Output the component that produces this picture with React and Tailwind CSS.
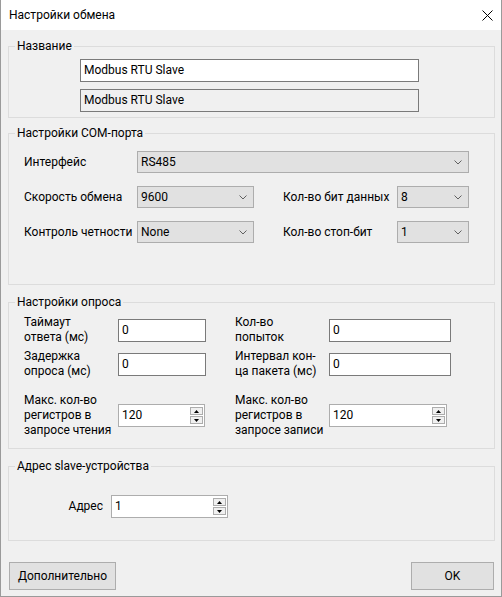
import React from 'react';

const Chevron = () => (
    <svg width="8" height="5" viewBox="0 0 8 5" className="shrink-0">
        <polyline points="0.5,0.5 4,4 7.5,0.5" fill="none" stroke="#606060" strokeWidth="1" />
    </svg>
);

const Combo = ({ value, className = '' }) => (
    <div className={`h-[22px] flex items-center justify-between pl-[3px] pr-[6px] bg-[#e1e1e1] border border-[#adadad] ${className}`}>
        <span>{value}</span>
        <Chevron />
    </div>
);

const TextBox = ({ value, className = '', disabled = false }) => (
    <div
        className={`h-[23px] flex items-center pl-[3px] border ${
            disabled ? 'bg-[#f0f0f0] border-[#7a7a7a]' : 'bg-white border-[#7a7a7a]'
        } ${className}`}
    >
        {value}
    </div>
);

const SpinArrow = ({ up }) => (
    <div className="w-[13px] h-[8px] border border-[#adadad] bg-[#f0f0f0] flex items-center justify-center">
        <svg width="5" height="3" viewBox="0 0 5 3">
            {up ? <polygon points="2.5,0 5,3 0,3" fill="#000" /> : <polygon points="0,0 5,0 2.5,3" fill="#000" />}
        </svg>
    </div>
);

const SpinBox = ({ value, className = '' }) => (
    <div className={`h-[23px] flex items-center justify-between pl-[3px] pr-[1px] bg-white border border-[#adadad] ${className}`}>
        <span>{value}</span>
        <div className="flex flex-col gap-[1px]">
            <SpinArrow up />
            <SpinArrow />
        </div>
    </div>
);

const Group = ({ title, className = '', children }) => (
    <fieldset className={`border border-[#dcdcdc] ${className}`}>
        <legend className="ml-[6px] px-[2px] leading-[14px]">{title}</legend>
        {children}
    </fieldset>
);

export default function App() {
    return (
        <div className="w-[502px] h-[597px] flex flex-col bg-[#f0f0f0] border-x border-b border-[#9a9a9a] text-[12px] text-black font-['Roboto',sans-serif] leading-[15px]">
            {/* title bar */}
            <div className="h-[30px] shrink-0 bg-white flex items-center justify-between pl-[8px] pr-[8px]">
                <span>Настройки обмена</span>
                <svg width="11" height="11" viewBox="0 0 11 11">
                    <path d="M0.5 0.5 L10.5 10.5 M10.5 0.5 L0.5 10.5" stroke="#000" strokeWidth="1" />
                </svg>
            </div>

            <div className="flex flex-col pl-[7px] pr-[6px]">
                <Group title="Название" className="mt-[9px]">
                    <div className="flex flex-col gap-[7px] pl-[71px] pt-[6px] pb-[5px]">
                        <TextBox value="Modbus RTU Slave" className="w-[339px]" />
                        <TextBox value="Modbus RTU Slave" className="w-[339px]" disabled />
                    </div>
                </Group>

                <Group title="Настройки COM-порта" className="mt-[8px]">
                    <div className="grid grid-cols-[113px_117px_29px_114px_72px] items-center gap-y-[13px] pl-[15px] pt-[11px] pb-[41px]">
                        <span>Интерфейс</span>
                        <Combo value="RS485" className="col-span-4" />

                        <span>Скорость обмена</span>
                        <Combo value="9600" />
                        <span />
                        <span>Кол-во бит данных</span>
                        <Combo value="8" />

                        <span>Контроль четности</span>
                        <Combo value="None" />
                        <span />
                        <span>Кол-во стоп-бит</span>
                        <Combo value="1" />
                    </div>
                </Group>

                <Group title="Настройки опроса" className="mt-[10px]">
                    <div className="grid grid-cols-[94px_88px_29px_94px_122px] items-center pl-[15px] pt-[6px] pb-[10px]">
                        <span>Таймаут<br />ответа (мс)</span>
                        <TextBox value="0" />
                        <span />
                        <span>Кол-во<br />попыток</span>
                        <TextBox value="0" />

                        <span className="mt-[4px]">Задержка<br />опроса (мс)</span>
                        <TextBox value="0" className="mt-[4px]" />
                        <span />
                        <span className="mt-[4px]">Интервал кон-<br />ца пакета (мс)</span>
                        <TextBox value="0" className="mt-[4px]" />

                        <span className="mt-[14px]">Макс. кол-во<br />регистров в<br />запросе чтения</span>
                        <SpinBox value="120" className="mt-[14px] w-[87px]" />
                        <span />
                        <span className="mt-[14px]">Макс. кол-во<br />регистров в<br />запросе записи</span>
                        <SpinBox value="120" className="mt-[14px] w-[118px]" />
                    </div>
                </Group>

                <Group title="Адрес slave-устройства" className="mt-[10px]">
                    <div className="flex items-center pl-[58px] pt-[22px] pb-[22px]">
                        <span className="w-[36px] mr-[8px] text-right">Адрес</span>
                        <SpinBox value="1" className="w-[117px]" />
                    </div>
                </Group>
            </div>

            {/* dialog buttons */}
            <div className="flex justify-between mt-[21px] pl-[8px] pr-[7px]">
                <button className="w-[107px] h-[28px] bg-[#e1e1e1] border border-[#adadad]">Дополнительно</button>
                <button className="w-[83px] h-[28px] bg-[#e1e1e1] border border-[#adadad]">OK</button>
            </div>
        </div>
    );
}
